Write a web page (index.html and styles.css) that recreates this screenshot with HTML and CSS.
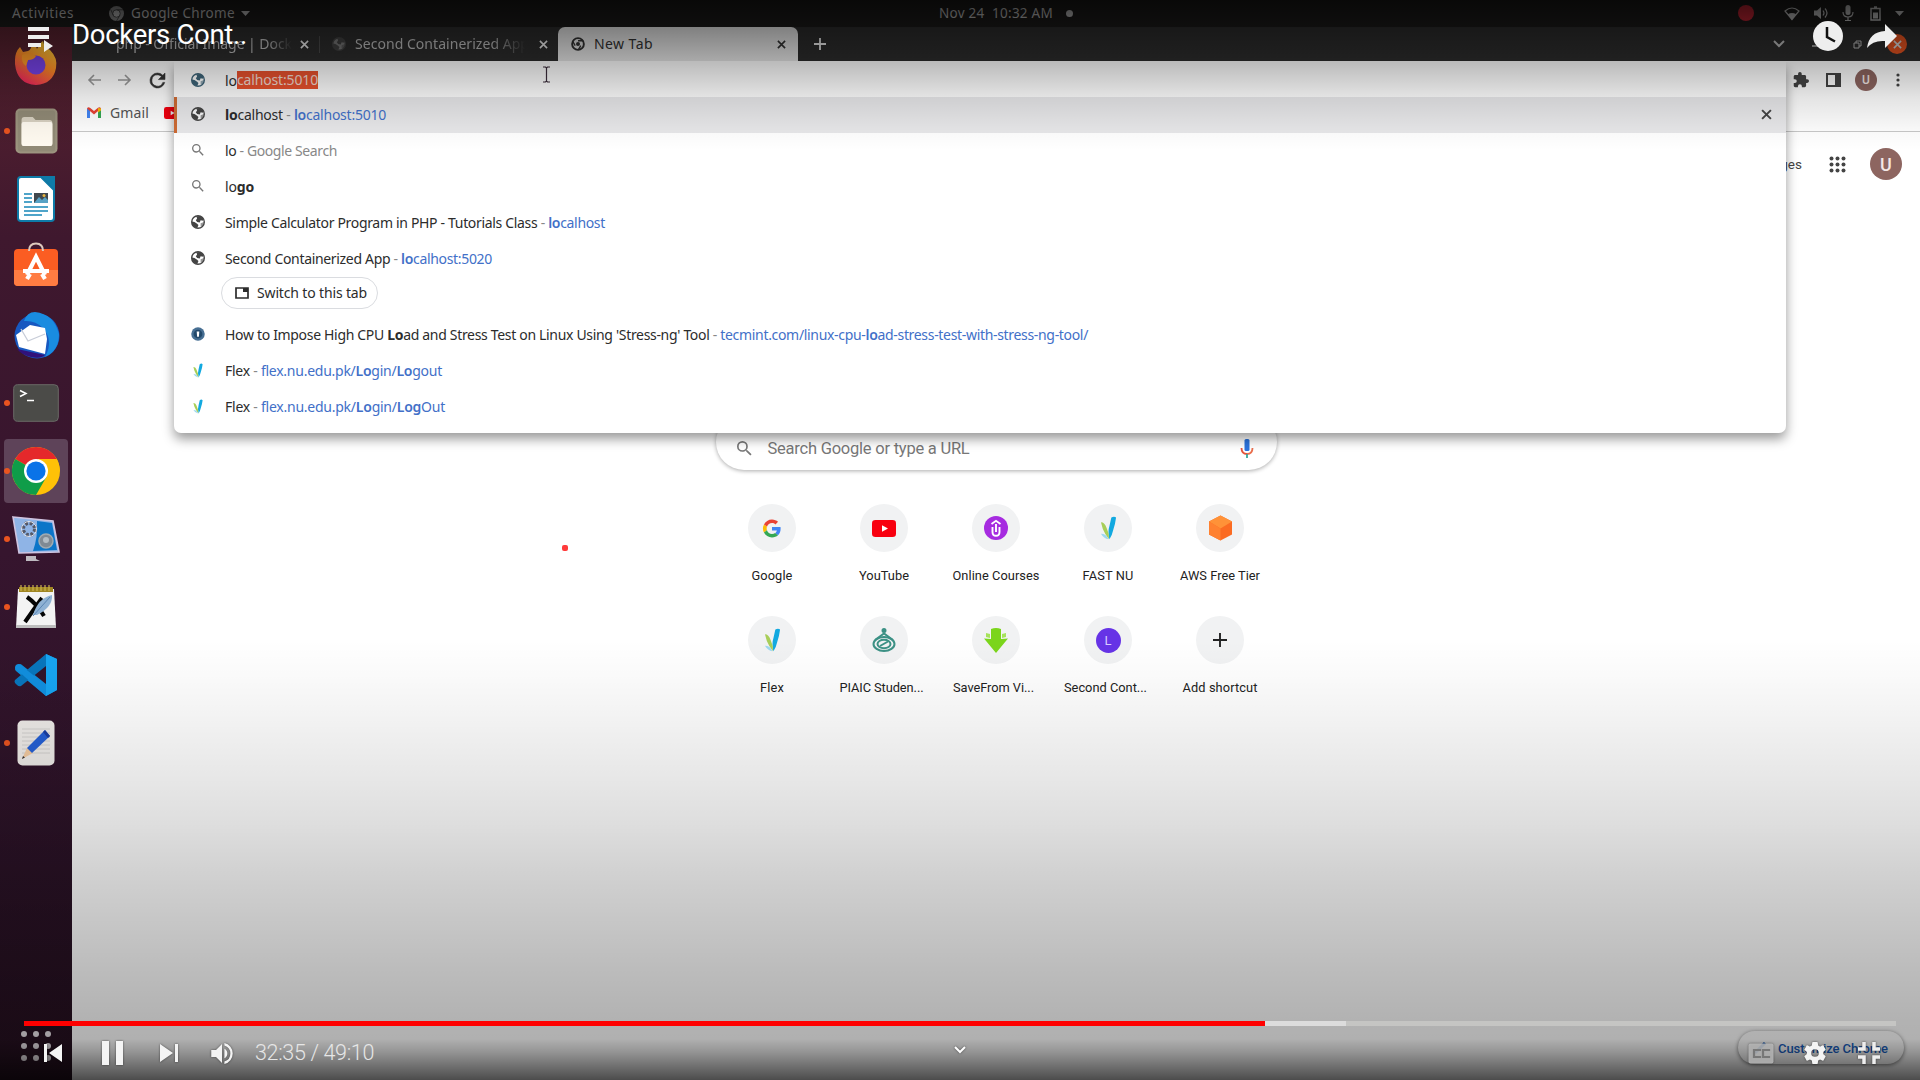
FILE: index.html
```html
<!DOCTYPE html>
<html lang="en">
<head>
<meta charset="utf-8">
<title>Dockers Cont..</title>
<link rel="stylesheet" href="styles.css">
</head>
<body>
<svg class="defs" aria-hidden="true">
  <symbol id="globe" viewBox="0 0 16 16"><circle cx="8" cy="8" r="7.200" fill="#fff" fill-opacity=".7" stroke="currentColor" stroke-width="1.600"/><path d="M6 1.500l5-.3 3 2.800-.5 2.500-2.500-.5-1 2.500-3-.5L5.500 6 7 4z"/><path d="M1 7.500l3 .5 3 2 1.500 1.500L7 15 3.500 13.500 1 10.500z"/><path d="M11 9.500l4-1.500-1.500 4-2.500 1z" fill-opacity=".55"/></symbol>
  <symbol id="search" viewBox="3 3 18 18"><path d="M15.500 14h-.79l-.28-.27A6.470 6.470 0 0 0 16 9.500 6.500 6.500 0 1 0 9.500 16c1.610 0 3.090-.59 4.230-1.570l.27.280v.790l5 4.990L20.490 19l-4.990-5zm-6 0a4.500 4.500 0 1 1 0-9 4.500 4.500 0 0 1 0 9z"/></symbol>
  <symbol id="cross" viewBox="0 0 10 10"><path d="M1 1l8 8M9 1L1 9" stroke="currentColor" stroke-width="1.800" fill="none"/></symbol>
  <symbol id="chromium" viewBox="0 0 16 16"><circle cx="8" cy="8" r="6.700" fill="none" stroke="currentColor" stroke-width="2.200"/><circle cx="8" cy="8" r="2.300"/><path d="M8 4.300h6M4.800 9.800L2 5M11.200 9.800L8.300 14.800" stroke="currentColor" stroke-width="1.500"/></symbol>
  <symbol id="leaf" viewBox="0 0 18 26"><path d="M12 2q3-2 5 0-1 8-3 13-1 5-4 10-2-8 0-14z" fill="#12a9e0"/><path d="M1 7q4 0 6 6 3 6 2.500 12Q5 19 3 14z" fill="#a8ce58"/><path d="M1 19q6 0 8 6-5-1-8-6z" fill="#9ed8ef"/></symbol>
  <symbol id="yt" viewBox="0 0 24 18"><rect width="24" height="18" rx="3.500" fill="#f8000f"/><path d="M10 5.500v7l6-3.500z" fill="#fff"/></symbol>
</svg>

<header class="sysbar">
  <span class="activities" data-w="62">Activities</span>
  <svg class="sys-app-icon" width="15" height="15" viewBox="0 0 16 16"><circle cx="8" cy="8" r="8" fill="#8a8a8a"/><circle cx="8" cy="8" r="4" fill="#b5b5b5" stroke="#444"/><path d="M8 4h7M4.500 10L2 4M11.500 10L8 16" stroke="#444"/></svg>
  <span class="sys-app" data-w="104">Google Chrome</span>
  <svg class="caret" width="9" height="5" viewBox="0 0 9 5"><path d="M0 0h9L4.500 5z"/></svg>
  <span class="date" data-w="114">Nov 24  10:32 AM</span>
  <i class="date-dot"></i>
  <div class="tray">
    <i class="rec"></i>
    <svg width="16" height="13" viewBox="0 0 16 13"><path d="M8 12.500L1 4Q8-2 15 4z" fill="none" stroke="currentColor" stroke-width="1.200"/><path d="M8 12.500L3.800 7.300Q8 4.500 12.200 7.300z"/></svg>
    <svg width="16" height="14" viewBox="0 0 16 14"><path d="M1 4.500h3L8 1v12L4 9.500H1z"/><path d="M10 4.500q2 2.500 0 5M12 2.500q4 4.500 0 9" fill="none" stroke="currentColor" stroke-width="1.200"/></svg>
    <svg width="12" height="16" viewBox="0 0 12 16"><rect x="3.500" width="5" height="10" rx="2.500"/><path d="M1 7q0 5 5 5t5-5M6 12v4M3 15.500h6" fill="none" stroke="currentColor" stroke-width="1.200"/></svg>
    <svg width="11" height="15" viewBox="0 0 11 15"><path d="M1 2.500h9V14H1zM4 1h3" fill="none" stroke="currentColor" stroke-width="1.400"/><path d="M3 6.500h5v6H3z"/></svg>
    <svg width="9" height="5" viewBox="0 0 9 5"><path d="M0 0h9L4.500 5z"/></svg>
  </div>
</header>

<div class="desktop">
  <nav class="dock">
    <div class="app"><svg width="46" height="46" viewBox="0 0 46 46"><defs><linearGradient id="fx" x1=".8" y1="0" x2=".3" y2="1"><stop offset="0" stop-color="#ffd83b"/><stop offset=".5" stop-color="#ff8a25"/><stop offset="1" stop-color="#f0245e"/></linearGradient></defs><path d="M2 20q0-8 5-13l3 5 5-1q3-1 4-7 4 1 5 5Q27 3 30 1q1 6 7 9 8 8 6 18-3 16-20 17Q4 44 2 24z" fill="url(#fx)"/><circle cx="23" cy="25" r="9.500" fill="#7542e5"/><path d="M9 15q8-4 14 1-2 4-8 4l-2 6q-5-3-4-11z" fill="#ff9a28"/></svg></div>
    <div class="app running"><svg width="43" height="46" viewBox="0 0 46 46" preserveAspectRatio="none"><rect x=".5" y=".5" width="45" height="45" rx="5" fill="#9c947f"/><rect x="3" y="2.500" width="40" height="41" rx="3" fill="#918a76"/><path d="M7 12q0-3 3-3h9l3 3h15q3 0 3 3v20q0 3-3 3H10q-3 0-3-3z" fill="#d8d1c1"/><rect x="7" y="14" width="33" height="24" rx="2" fill="#fffaf0"/></svg></div>
    <div class="app"><svg width="38" height="46" viewBox="0 0 38 46"><path d="M4 1h20l13 13v28q0 3-3 3H4q-3 0-3-3V4q0-3 3-3z" fill="#fff" stroke="#0e7ba8" stroke-width="2"/><path d="M24 0h14v14z" fill="#0e7ba8"/><path d="M7 18h8M7 22h8M7 26h8M7 31h24M7 35h24M7 39h18" stroke="#1687b8" stroke-width="1.700"/><rect x="17" y="17" width="14" height="10" fill="#40484e"/><path d="M17 27l5-6 3 3 3-3 3 3v3z" fill="#57a2c5"/><circle cx="27" cy="19.500" r="1.500" fill="#e9b640"/></svg></div>
    <div class="app store"><svg width="46" height="44" viewBox="0 0 46 44"><rect x="1" y="7" width="44" height="37" rx="4" fill="#fb5d22"/><path d="M1 28h44v12q0 4-4 4H5q-4 0-4-4z" fill="#ff7c42"/><path d="M16 9q0-7.500 7-7.500T30 9" fill="none" stroke="#ddc9bd" stroke-width="2"/><path d="M14 33l9-18 9 18M10 29h26M14 37l3-5M32 37l-3-5" fill="none" stroke="#fff" stroke-width="4.200"/></svg></div>
    <div class="app"><svg width="48" height="48" viewBox="0 0 48 48"><circle cx="25" cy="25" r="22.500" fill="#1758c0"/><path d="M12 10Q15 1 23 1q19 2 24 22 0 17-14 23 9-16-2-29-8-8-19-7z" fill="#198ce0"/><path d="M4 24l14-10 15 3 2 11-2 15-26-7z" fill="#fff"/><path d="M9 18l7 12 17-7" fill="none" stroke="#c8cdd8" stroke-width="1.300"/><path d="M5 38l28 6q-4 4-14 2-9-2-14-8z" fill="#31127a"/></svg></div>
    <div class="app running"><svg width="46" height="38" viewBox="0 0 46 38"><rect x=".7" y=".7" width="44.600" height="36.600" rx="4" fill="#4b4b48" stroke="#696966"/><path d="M7 6.500l6 3-6 3M14 16.500h7" fill="none" stroke="#fff" stroke-width="1.500"/></svg></div>
    <div class="app running current"><svg width="48" height="48" viewBox="0 0 48 48"><circle cx="24" cy="24" r="24" fill="#ffc107"/><path d="M24 24L3.200 12A24 24 0 0 1 44.800 12z" fill="#e5282b"/><path d="M24 24L3.200 12A24 24 0 0 0 24 48l10.400-18z" fill="#0f9d49"/><path d="M24 12h20.800L24 24z" fill="#e5282b"/><path d="M24 24h24q-1-8-3.200-12H26z" fill="#ffc107"/><circle cx="24" cy="24" r="12" fill="#fff"/><circle cx="24" cy="24" r="9.600" fill="#0a73e8"/></svg></div>
    <div class="app running"><svg width="48" height="46" viewBox="0 0 48 46"><path d="M1 1l40 4 6 31-40 1z" fill="#8fb4e6" stroke="#cfc4e0" stroke-width="1.600"/><path d="M25 5l15 2 5 27-24 1q5-14 4-30z" fill="#0c75c8"/><circle cx="17" cy="13" r="6" fill="none" stroke="#555968" stroke-width="4" stroke-dasharray="3 1.700"/><circle cx="17" cy="13" r="7.500" fill="none" stroke="#dfe2ea"/><circle cx="34" cy="25" r="7" fill="#7f8a94" stroke="#a0abb2" stroke-width="1.500"/><circle cx="34" cy="24" r="3" fill="#b3bdc4"/><path d="M14 40h10v3l4 2H14z" fill="#bebac0"/></svg></div>
    <div class="app running"><svg width="42" height="44" viewBox="0 0 42 44"><path d="M3 4h36l2 39H1z" fill="#f3f3f3"/><path d="M1 40h40v3H1z" fill="#bdbdbd"/><path d="M4 2h34v5H4z" fill="#9f8522"/><path d="M6 0v6M10 0v6M14 0v6M18 0v6M22 0v6M26 0v6M30 0v6M34 0v6" stroke="#cbb34f" stroke-width="1.200"/><path d="M12 12q10 7 17 19M27 13Q19 24 10 37" fill="none" stroke="#050505" stroke-width="4"/><path d="M18 30Q23 13 37 10q1 12-15 20z" fill="#8fb2d4"/><path d="M18 31L35 12" stroke="#5c86b4"/></svg></div>
    <div class="app"><svg width="44" height="44" viewBox="0 0 44 44"><path d="M32 1l11 5v31l-11 6L2 18q-2-2 0-4l2-2q2-2 4 0l24 19z" fill="#0c8fdc"/><path d="M32 1v12L7 33q-2 1-4-1l-2-2q-1-2 0-3z" fill="#0876bd"/><path d="M32 1l11 5v31l-11 6z" fill="#17a5f2"/><path d="M1 15q0-4 4-4l27 21v11z" fill="#118fdf"/></svg></div>
    <div class="app running"><svg width="38" height="46" viewBox="0 0 38 46"><rect x=".5" y=".5" width="37" height="45" rx="5" fill="#eeebe8"/><path d="M5 9h28M5 13h28M5 17h28M5 21h28M5 25h28M5 29h28M5 33h28" stroke="#d2d0ce"/><path d="M5 39l5-11 6 5z" fill="#f2caa0"/><path d="M5 39l1-3 2 1.500z" fill="#333"/><path d="M10 28L28 10l5 6-18 17z" fill="#2560d5"/><path d="M28 10l5 6-2 2-5-6z" fill="#1b3fa2"/></svg></div>
    <div class="all-apps"><i></i><i></i><i></i><i></i><i></i><i></i><i></i><i></i><i></i></div>
  </nav>

  <section class="browser">
    <div class="tabs">
      <div class="tab first"><span data-w="176">php - Official Image | Dock</span><svg width="9" height="9"><use href="#cross"/></svg></div>
      <div class="tab second"><svg class="fav" width="14" height="14"><use href="#globe"/></svg><span class="fade" data-w="174">Second Containerized App</span><svg width="9" height="9"><use href="#cross"/></svg></div>
      <div class="tab active"><svg class="fav" width="14" height="14"><use href="#chromium"/></svg><span data-w="59">New Tab</span><svg width="9" height="9"><use href="#cross"/></svg></div>
      <svg class="plus" width="12" height="12" viewBox="0 0 12 12"><path d="M6 0v12M0 6h12" stroke="currentColor" stroke-width="1.800"/></svg>
      <div class="win">
        <svg width="12" height="8" viewBox="0 0 12 8"><path d="M1 1l5 5 5-5" fill="none" stroke="currentColor" stroke-width="2"/></svg>
        <svg width="9" height="6" viewBox="0 0 9 6"><path d="M0 5h9" stroke="currentColor" stroke-width="1.500"/></svg>
        <svg width="9" height="9" viewBox="0 0 9 9"><path d="M1 3h5v5H1zM3 3V1h5v5H6" fill="none" stroke="currentColor"/></svg>
        <b class="close"><svg width="9" height="9"><use href="#cross"/></svg></b>
      </div>
    </div>
    <div class="toolbar">
      <svg class="pale" width="14" height="12" viewBox="0 0 14 12"><path d="M14 6H2M7 1L2 6l5 5" fill="none" stroke="currentColor" stroke-width="1.600"/></svg>
      <svg class="pale" width="14" height="12" viewBox="0 0 14 12"><path d="M0 6h12M7 1l5 5-5 5" fill="none" stroke="currentColor" stroke-width="1.600"/></svg>
      <svg width="15" height="15" viewBox="4 4 16 16"><path stroke="currentColor" stroke-width=".6" d="M17.650 6.350A7.960 7.960 0 0 0 12 4a8 8 0 1 0 7.730 10h-2.080A6 6 0 1 1 12 6c1.660 0 3.140.69 4.220 1.780L13 11h7V4z"/></svg>
      <div class="tools">
        <svg width="16" height="16" viewBox="1 1 22 22"><path d="M20.500 11H19V7c0-1.100-.9-2-2-2h-4V3.500a2.500 2.500 0 0 0-5 0V5H4c-1.100 0-2 .9-2 2v3.800h1.500a2.700 2.700 0 0 1 0 5.400H2V20c0 1.100.9 2 2 2h3.800v-1.500a2.700 2.700 0 0 1 5.400 0V22H17c1.100 0 2-.9 2-2v-4h1.500a2.500 2.500 0 0 0 0-5z"/></svg>
        <svg width="15" height="14" viewBox="0 0 15 14"><path d="M1 1h13v12H1z" fill="none" stroke="currentColor" stroke-width="2"/><path d="M9 1h5v12H9z"/></svg>
        <b class="avatar small">U</b>
        <svg width="4" height="14" viewBox="0 0 4 14"><circle cx="2" cy="2" r="1.600"/><circle cx="2" cy="7" r="1.600"/><circle cx="2" cy="12" r="1.600"/></svg>
      </div>
    </div>
    <div class="bookmarks">
      <svg width="14" height="11" viewBox="0 0 14 11"><path d="M0 1.500h3V11H0z" fill="#4285f4"/><path d="M11 1.500h3V11h-3z" fill="#34a853"/><path d="M0 1.500Q1-.5 3 .8l4 3.200 4-3.200q2-1.300 3 .7L7 7.500z" fill="#ea4335"/><path d="M11 1l3 .5v2L11 5.500z" fill="#fbbc04"/></svg>
      <span data-w="39">Gmail</span>
      <svg class="bm-yt" width="16" height="12"><use href="#yt"/></svg>
    </div>
    <main class="page">
      <div class="page-top"><span>Images</span>
        <svg width="17" height="17" viewBox="0 0 17 17"><g id="r"><circle cx="2.500" cy="2.500" r="2"/><circle cx="8.500" cy="2.500" r="2"/><circle cx="14.500" cy="2.500" r="2"/></g><use href="#r" y="6"/><use href="#r" y="12"/></svg>
        <b class="avatar">U</b></div>
      <div class="searchbox">
        <svg width="15" height="15"><use href="#search"/></svg>
        <span data-w="202">Search Google or type a URL</span>
        <svg class="mic" width="14" height="20" viewBox="0 0 14 20"><rect x="4.500" width="5" height="12" rx="1.500" fill="#2c74de"/><path d="M1.500 9q0 6 5.500 6" fill="none" stroke="#e5553d" stroke-width="1.800"/><path d="M7 15q5.500 0 5.500-6" fill="none" stroke="#ea6f4e" stroke-width="1.800"/><path d="M7 15v4" stroke="#37a59a" stroke-width="1.800"/></svg>
      </div>
      <div class="shortcuts">
        <div class="sc"><i><svg width="18" height="19" viewBox="0 0 48 48"><path fill="#EA4335" d="M24 9.500c3.540 0 6.710 1.220 9.210 3.600l6.850-6.850C35.900 2.380 30.470 0 24 0 14.620 0 6.510 5.380 2.560 13.220l7.980 6.190C12.430 13.720 17.740 9.500 24 9.500z"/><path fill="#4285F4" d="M46.980 24.550c0-1.570-.15-3.090-.38-4.550H24v9.020h12.940c-.58 2.960-2.260 5.480-4.780 7.180l7.730 6c4.510-4.180 7.090-10.360 7.090-17.650z"/><path fill="#FBBC05" d="M10.530 28.590a14.500 14.500 0 0 1 0-9.180l-7.980-6.190a24 24 0 0 0 0 21.560z"/><path fill="#34A853" d="M24 48c6.480 0 11.930-2.130 15.890-5.810l-7.730-6c-2.150 1.450-4.920 2.300-8.160 2.300-6.260 0-11.570-4.220-13.470-9.910l-7.980 6.190C6.510 42.620 14.620 48 24 48z"/></svg></i><span data-w="41">Google</span></div>
        <div class="sc"><i><svg width="24" height="17" viewBox="0 0 24 18" preserveAspectRatio="none"><use href="#yt"/></svg></i><span data-w="50">YouTube</span></div>
        <div class="sc"><i><svg width="24" height="24" viewBox="0 0 24 24"><circle cx="12" cy="12" r="12" fill="#a62be0"/><path d="M7.500 8L12 4.800 16.500 8M8.500 11v5q0 3.800 3.500 3.800t3.500-3.800v-5M12 8v8" fill="none" stroke="#fff" stroke-width="1.900"/></svg></i><span data-w="87">Online Courses</span></div>
        <div class="sc"><i><svg width="17" height="26"><use href="#leaf"/></svg></i><span data-w="51">FAST NU</span></div>
        <div class="sc"><i><svg width="23" height="26" viewBox="0 0 23 25"><path d="M11.500 0L23 6v13l-11.500 6L0 19V6z" fill="#fb6b22"/><path d="M11.500 0L23 6l-11.500 7L0 6z" fill="#ff9238"/><path d="M0 6l11.500 7v12L0 19z" fill="#ff8130"/></svg></i><span data-w="80">AWS Free Tier</span></div>
        <div class="sc"><i><svg width="17" height="26"><use href="#leaf"/></svg></i><span data-w="24">Flex</span></div>
        <div class="sc cut"><i><svg width="24" height="24" viewBox="0 0 24 24"><g fill="none" stroke="#3c9185" stroke-width="2"><circle cx="12" cy="2.500" r="1.500" fill="#3c9185"/><ellipse cx="12" cy="16" rx="10.500" ry="7"/><ellipse cx="12" cy="16" rx="6.500" ry="4.200"/><path d="M3 12l9-6.500L21 12M8 18l8-4.500"/></g></svg></i><span data-w="84">PIAIC Studen...</span></div>
        <div class="sc cut"><i><svg width="24" height="25" viewBox="0 0 24 25"><path d="M7 1q5-2 10 0v10l7-.5L12 25 0 10.500 7 11z" fill="#7bd51b"/><path d="M2 5l4 1v4L2 9zM22 5l-4 1v4l4-1z" fill="#a6e35b"/></svg></i><span data-w="81">SaveFrom Vi...</span></div>
        <div class="sc cut"><i><b class="letter">L</b></i><span data-w="83">Second Cont...</span></div>
        <div class="sc"><i><svg width="14" height="14" viewBox="0 0 14 14"><path d="M7 0v14M0 7h14" stroke="#222" stroke-width="1.900"/></svg></i><span data-w="75">Add shortcut</span></div>
      </div>
      <div class="customize"><svg width="14" height="14" viewBox="0 0 14 14"><path d="M2 12L12 2" stroke="#1a66c9" stroke-width="3"/></svg><span data-w="110">Customize Chrome</span></div>
    </main>
  </section>
</div>

<div class="omnibox">
  <div class="row input"><svg width="14" height="14"><use href="#globe"/></svg><span data-w="12">lo</span><mark data-w="81">calhost:5010</mark></div>
  <div class="row selected"><svg width="14" height="14"><use href="#globe"/></svg><span data-w="161"><b>lo</b>calhost<em> - </em><a><b>lo</b>calhost:5010</a></span><svg class="rm" width="11" height="11"><use href="#cross"/></svg></div>
  <div class="row"><svg class="mag" width="12" height="12"><use href="#search"/></svg><span data-w="112">lo<em> - Google Search</em></span></div>
  <div class="row"><svg class="mag" width="12" height="12"><use href="#search"/></svg><span data-w="29">lo<b>go</b></span></div>
  <div class="row"><svg width="14" height="14"><use href="#globe"/></svg><span data-w="380">Simple Calculator Program in PHP - Tutorials Class<em> - </em><a><b>lo</b>calhost</a></span></div>
  <div class="row"><svg width="14" height="14"><use href="#globe"/></svg><span data-w="267">Second Containerized App<em> - </em><a><b>lo</b>calhost:5020</a></span></div>
  <div class="row switch"><div class="chip"><svg width="14" height="12" viewBox="0 0 14 12"><path d="M1 1h12v10H1z" fill="none" stroke="currentColor" stroke-width="1.700"/><path d="M8 1h5v4H8z"/></svg><span data-w="110">Switch to this tab</span></div></div>
  <div class="row"><svg width="16" height="16" viewBox="0 0 16 16"><circle cx="8" cy="8" r="7.700" fill="#476f93"/><circle cx="8" cy="8" r="5" fill="#23496b"/><path d="M6.500 5h3l-.5 6H7z" fill="#fff"/></svg><span data-w="863">How to Impose High CPU <b>Lo</b>ad and Stress Test on Linux Using 'Stress-ng' Tool<em> - </em><a>tecmint.com/linux-cpu-<b>lo</b>ad-stress-test-with-stress-ng-tool/</a></span></div>
  <div class="row"><svg width="12" height="15"><use href="#leaf"/></svg><span data-w="217">Flex<em> - </em><a>flex.nu.edu.pk/<b>Lo</b>gin/<b>Lo</b>gout</a></span></div>
  <div class="row"><svg width="12" height="15"><use href="#leaf"/></svg><span data-w="220">Flex<em> - </em><a>flex.nu.edu.pk/<b>Lo</b>gin/<b>Log</b>Out</a></span></div>
</div>
<svg class="ibeam" width="7" height="17" viewBox="0 0 7 17"><path d="M0 1h2.500l1 1 1-1H7M3.500 2v13M0 16h2.500l1-1 1 1H7" fill="none" stroke="#3b2d3b" stroke-width="1.200"/></svg>
<i class="laser"></i>

<div class="player">
  <div class="player-top">
    <svg width="27" height="25" viewBox="0 0 27 25"><path d="M0 0h21v4H0zM0 8h21v4H0zM0 16h13v4H0zM16 13l9 6-9 6z"/></svg>
    <h1 data-w="175">Dockers Cont..</h1>
    <svg class="later" width="30" height="30" viewBox="0 0 30 30"><circle cx="15" cy="15" r="15"/><path d="M14 6v10l8 4.500" fill="none" stroke="#111" stroke-width="2.500"/></svg>
    <svg width="30" height="24" viewBox="0 0 30 24"><path d="M18 0l12 12-12 12v-7Q6 16 0 24 2 8 18 7z"/></svg>
  </div>
  <div class="player-bottom">
    <div class="track"><div class="buffered"></div><div class="played"></div></div>
    <div class="controls">
      <svg width="18" height="18" viewBox="0 0 18 18"><path d="M0 0h3v18H0zM18 0v18L5 9z"/></svg>
      <svg class="pause" width="21" height="24" viewBox="0 0 21 24"><path d="M0 0h7v24H0zM14 0h7v24h-7z"/></svg>
      <svg class="next" width="18" height="18" viewBox="0 0 18 18"><path d="M15 0h3v18h-3zM0 0v18L13 9z"/></svg>
      <svg class="vol" width="22" height="21" viewBox="3 3.200 18 17.600"><path d="M3 9v6h4l5 5V4L7 9H3zm13.500 3A4.500 4.500 0 0 0 14 7.970v8.050A4.470 4.470 0 0 0 16.500 12zM14 3.230v2.060a7 7 0 0 1 0 13.420v2.060a9 9 0 0 0 0-17.540z"/></svg>
      <span class="time" data-w="119">32:35 / 49:10</span>
      <svg class="down" width="12" height="8" viewBox="0 0 12 8"><path d="M1 1l5 5 5-5" fill="none" stroke="#fff" stroke-width="2"/></svg>
      <svg class="cc" width="26" height="21" viewBox="0 0 26 21"><rect x=".5" y=".5" width="25" height="20" rx="2" fill="#c2c2c2" fill-opacity=".8"/><path d="M12 8V7H6v7h6v-1M21 8V7h-6v7h6v-1" fill="none" stroke="#777" stroke-width="2.200"/></svg>
      <svg class="gear" width="22" height="22" viewBox="2 2 20 20"><path d="M19.430 12.980c.04-.32.07-.64.07-.98s-.03-.66-.07-.98l2.110-1.650c.19-.15.24-.42.12-.64l-2-3.460c-.12-.22-.39-.3-.61-.22l-2.490 1c-.52-.4-1.080-.73-1.690-.98l-.38-2.650A.49.49 0 0 0 14 2h-4c-.25 0-.46.180-.49.420l-.38 2.650c-.61.250-1.170.590-1.690.980l-2.490-1c-.23-.09-.49 0-.61.220l-2 3.460c-.13.220-.07.490.12.640l2.110 1.650c-.04.320-.07.650-.07.980s.03.660.07.980l-2.110 1.650c-.19.150-.24.420-.12.640l2 3.460c.12.220.39.300.61.220l2.490-1c.52.400 1.080.730 1.690.980l.38 2.650c.03.240.24.420.49.420h4c.25 0 .46-.18.49-.42l.38-2.650c.61-.25 1.170-.59 1.690-.98l2.490 1c.23.090.49 0 .61-.22l2-3.460c.12-.22.07-.49-.12-.64zM12 15.500a3.500 3.500 0 1 1 0-7 3.500 3.500 0 0 1 0 7z"/></svg>
      <svg class="fs" width="22" height="22" viewBox="0 0 22 22"><path d="M0 7h6V0M22 7h-6V0M0 15h6v7M22 15h-6v7" fill="none" stroke="#eee" stroke-width="3.500"/></svg>
    </div>
  </div>
</div>
<script src="fit.js"></script>
</body>
</html>
```
FILE: fit.js
```js
// Tracks each label so that it fills the width given in data-w.
document.querySelectorAll('[data-w]').forEach(function (el) {
  var extra = parseFloat(el.dataset.w) - el.getBoundingClientRect().width;
  el.style.letterSpacing = (extra / el.textContent.length).toFixed(3) + 'px';
});
```
FILE: styles.css
```css
* { box-sizing: border-box; }
body { margin: 0; width: 1920px; height: 1080px; overflow: hidden; position: relative; display: flex; flex-direction: column; font: 14px "Noto Sans", sans-serif; color: #333; background: #fff; }
svg { display: block; flex: none; fill: currentColor; overflow: visible; }
.defs { position: absolute; width: 0; height: 0; }
[data-w] { display: inline-block; white-space: pre; flex: none; }
i, em { font-style: normal; }

.sysbar { flex: 0 0 27px; display: flex; align-items: center; background: #1b1a19; color: #bbb; padding: 0 16px 1px 12px; font-size: 13.5px; }
.sys-app-icon { margin-left: 35px; margin-right: 7px; }
.caret { margin-left: 6px; }
.date { margin-left: 689px; }
.date-dot { width: 7px; height: 7px; border-radius: 50%; background: #bbb; margin-left: 13px; }
.tray { margin-left: auto; display: flex; align-items: center; gap: 14px; }
.rec { width: 16px; height: 16px; border-radius: 50%; background: #c22433; margin-right: 16px; }
.tray svg:nth-of-type(1), .tray svg:nth-of-type(2) { margin-right: -1px; }
.tray svg:nth-of-type(3) { margin-right: 2px; }

.desktop { flex: 1; display: flex; min-height: 0; }
.dock { width: 72px; flex: none; display: flex; flex-direction: column; padding-top: 2px; background: linear-gradient(#58222f 0, #3f182e 20%, #36152e 50%, #2a1226 80%, #25101f 100%); }
.app { height: 68px; display: flex; align-items: center; justify-content: center; position: relative; }
.app.running::before { content: ""; position: absolute; left: 4px; top: 31px; width: 6px; height: 6px; border-radius: 50%; background: #e95420; }
.current { height: 64px; margin: 2px 4px; border-radius: 4px; background: #5e4359; }
.app.current::before { left: 0; top: 29px; }
.store { padding-bottom: 6px; }
.all-apps { margin: auto 0 19px 21px; display: grid; grid-template-columns: repeat(3, 6px); gap: 6px; }
.all-apps i { width: 6px; height: 6px; border-radius: 50%; background: #ebe5ea; }

.browser { flex: 1; display: flex; flex-direction: column; min-width: 0; }
.tabs { height: 34px; flex: none; display: flex; align-items: center; background: #2c2c2c; color: #bdbdbd; padding-right: 13px; font-size: 14px; }
.tab { height: 34px; display: flex; align-items: center; }
.tab span { padding-bottom: 1px; }
.first { width: 248px; padding-left: 44px; background: linear-gradient(#484848, #484848) right / 1px 17px no-repeat; }
.first svg { margin-left: 8px; color: #eee; }
.first span { -webkit-mask-image: linear-gradient(90deg, #000 86%, transparent); }
.second { width: 238px; padding-left: 12px; }
.fav { margin-right: 9px; }
.second .fav { color: #555; opacity: .5; }
.second span { -webkit-mask-image: linear-gradient(90deg, #000 78%, transparent 98%); }
.second svg:last-child { margin-left: 10px; color: #eee; }
.active { width: 240px; padding: 0 12px 0 13px; background: #e8e8e8; border-radius: 7px 7px 0 0; color: #333; }
.active svg:last-child { margin-left: auto; }
.plus { margin-left: 16px; color: #eee; }
.win { margin-left: auto; display: flex; align-items: center; gap: 27px; }
.win svg:nth-child(3) { margin-left: 5px; }
.close { width: 20px; height: 20px; border-radius: 50%; background: #e95420; display: flex; align-items: center; justify-content: center; color: #ddd; margin-left: -2px; }

.toolbar { height: 36px; flex: none; display: flex; align-items: center; gap: 18px; padding: 2px 20px 0 15px; color: #333; }
.toolbar > svg { margin-left: -.5px; }
.pale { color: #999; }
.tools { margin-left: auto; display: flex; align-items: center; gap: 17px; color: #444; }
.avatar { width: 32px; height: 32px; border-radius: 50%; background: #8d6560; color: #f4e8e6; display: flex; align-items: center; justify-content: center; font: 500 18px Roboto, sans-serif; }
.small { width: 22px; height: 22px; font-size: 12px; margin: 0 2px 0 -3px; }
.bookmarks { height: 35px; flex: none; display: flex; align-items: center; padding: 0 0 3px 15px; border-bottom: 1px solid #c8c8c8; }
.bookmarks span { margin-left: 9px; color: #555; }
.bm-yt { margin-left: 15px; }

.page { flex: 1; display: flex; flex-direction: column; align-items: center; padding-bottom: 16px; font-family: Roboto, sans-serif; }
.page-top { align-self: stretch; height: 64px; display: flex; align-items: center; justify-content: flex-end; padding-right: 18px; color: #444; font-size: 13.5px; }
.page-top svg { margin: 0 24px 0 27px; }
.searchbox { width: 561px; height: 56px; margin-top: 218px; border-radius: 28px; display: flex; align-items: center; padding: 13px 23px 0 21px; box-shadow: 0 1px 4px #0005; color: #777; font-size: 16.5px; }
.searchbox span { margin-left: 16px; }
.mic { margin-left: auto; }
.shortcuts { display: grid; grid-template-columns: repeat(5, 112px); grid-auto-rows: 112px; margin-top: 34px; }
.sc { display: flex; flex-direction: column; align-items: center; font-size: 12.8px; font-weight: 400; color: #222; }
.sc > i { width: 48px; height: 48px; border-radius: 50%; background: #f1f2f3; display: flex; align-items: center; justify-content: center; margin-bottom: 16px; }
.cut span { margin-right: 5px; }
.letter { width: 25px; height: 25px; border-radius: 50%; background: #6633e6; color: #d8ccff; font: 13px/25px Roboto, sans-serif; text-align: center; }
.customize { margin: auto 16px 0 auto; width: 166px; height: 33px; border-radius: 17px; box-shadow: 0 1px 4px #0008; display: flex; align-items: center; padding: 1px 0 0 15px; color: #1a5fc0; font-size: 13px; font-weight: 500; }
.customize span { margin-left: 11px; }

.omnibox { position: absolute; left: 174px; top: 62px; width: 1612px; height: 371px; background: #fff; border-radius: 0 0 7px 7px; box-shadow: 0 6px 12px #0006; clip-path: inset(0 -20px -24px -20px); color: #2c2c2c; }
.row { height: 36px; display: flex; align-items: center; padding: 0 0 2px 51px; }
.row > svg:first-child { margin-left: -34px; width: 14px; margin-right: 20px; color: #444; }
.row > .mag:first-child { width: 12px; color: #777; margin-left: -33px; margin-right: 21px; }
.row b { font-weight: 700; }
.row em { color: #888; }
.row a { color: #4270c8; }
.row a b { font-weight: 600; }
.input { height: 35px; padding-top: 1px; padding-bottom: 0; }
.input > svg:first-child { color: #3d6478; }
.input mark { background: #e9512d; color: #f4d9d0; line-height: 18px; }
.selected { background: #e8e8ea; border-left: 3px solid #cd6a33; padding-left: 48px; }
.rm { margin-left: auto; margin-right: 14px; color: #444; }
.switch { height: 40px; padding: 0 0 9px 47px; }
.chip { width: 157px; height: 32px; border: 1px solid #dadce0; border-radius: 16px; display: flex; align-items: center; padding-left: 13px; }
.chip span { margin-left: 8px; }
.ibeam { position: absolute; left: 543px; top: 66px; }
.laser { position: absolute; left: 562px; top: 545px; width: 6px; height: 6px; border-radius: 2px; background: #ff3b3b; }

.player { position: absolute; inset: 0; display: flex; flex-direction: column; justify-content: space-between; color: #eee;
  background:
    linear-gradient(rgba(0,0,0,.68) 0, rgba(0,0,0,.45) 27px, rgba(0,0,0,.27) 61px, rgba(0,0,0,.11) 97px, rgba(0,0,0,.03) 128px, transparent 150px),
    linear-gradient(transparent 640px, rgba(0,0,0,.025) 680px, rgba(0,0,0,.09) 773px, rgba(0,0,0,.13) 823px, rgba(0,0,0,.18) 873px, rgba(0,0,0,.225) 923px, rgba(0,0,0,.265) 973px, rgba(0,0,0,.3) 1020px, rgba(0,0,0,.31) 1039px, rgba(0,0,0,.42) 1052px, rgba(0,0,0,.70) 1080px); }
.player-top { display: flex; align-items: center; height: 72px; padding: 0 23px 0 28px; }
.player-top > svg:first-child { margin-top: 6px; }
h1 { margin: -3px 0 0 17px; font: 400 27.5px Roboto, sans-serif; color: #fff; }
.later { margin-left: auto; margin-right: 24px; }
.player-bottom { display: flex; flex-direction: column; height: 59px; }
.track { height: 5px; margin: 0 24px; background: #c5c5c3; display: grid; }
.track > div { grid-area: 1 / 1; }
.buffered { width: 1322px; background: #dcdcdc; }
.played { width: 1241px; background: #f00; }
.controls { height: 54px; display: flex; align-items: center; padding: 0 40px 0 44px; color: #f4f4f4; }
.controls svg { filter: drop-shadow(0 0 1px #0008); }
.pause { margin-left: 40px; }
.next { margin-left: 37px; }
.vol { margin-left: 33px; }
.time { margin: -2px 0 0 22px; font: 300 21.5px Roboto, sans-serif; color: #e6e6e6; }
.down { margin: -7px 0 0 580px; }
.cc { margin-left: auto; }
.gear { margin-left: 30px; }
.fs { margin-left: 32px; }
```
